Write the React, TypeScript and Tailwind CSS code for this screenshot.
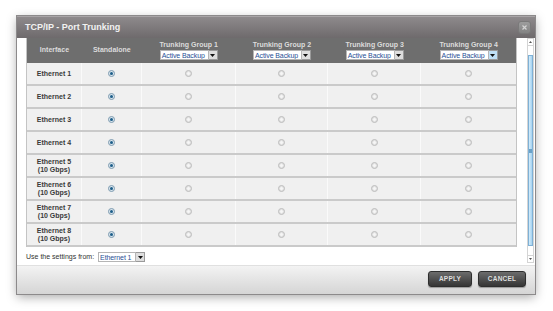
import React from "react";

const groups = [1, 2, 3, 4];
const rows = [
  { name: "Ethernet 1" },
  { name: "Ethernet 2" },
  { name: "Ethernet 3" },
  { name: "Ethernet 4" },
  { name: "Ethernet 5", sub: "(10 Gbps)" },
  { name: "Ethernet 6", sub: "(10 Gbps)" },
  { name: "Ethernet 7", sub: "(10 Gbps)" },
  { name: "Ethernet 8", sub: "(10 Gbps)" },
];
const colWidths = ["w-[94px]", "w-[93px]", "w-[93px]", "w-[95px]"];

export default function App() {
  return (
    <div className="h-[311px] w-[553px] bg-white pl-[17px] pt-[16px] font-['Liberation_Sans',Arial,sans-serif]">
      <div className="flex h-[278px] w-[518px] flex-col shadow-[0_0_0_1px_#8c8a8b,0_3px_10px_rgba(0,0,0,0.35)]">
        <div className="flex h-[22px] items-center justify-between border-t border-[#a9a5a7] bg-gradient-to-b from-[#8e8a8c] to-[#6e6a6c] pl-[8px] pr-[4px]">
          <span className="text-[9px] font-bold text-[#f2f2f2]">TCP/IP - Port Trunking</span>
          <CloseButton />
        </div>

        <div className="flex h-[227px] bg-white">
          <div className="flex w-[500px] flex-col pl-[9px]">
            <Table />
            <div className="flex flex-1 items-center gap-[4px] pt-[2px] text-[7px] text-[#333]">
              <span>Use the settings from:</span>
              <Select label="Ethernet 1" width="w-[38px]" />
            </div>
          </div>
          <Scrollbar />
        </div>

        <div className="flex h-[29px] items-start justify-end gap-[6px] border-t border-[#e0e0e0] bg-gradient-to-b from-[#f3f3f3] to-[#d5d5d5] pr-[9px] pt-[5px]">
          <Button label="APPLY" width="w-[44px]" />
          <Button label="CANCEL" width="w-[48px]" />
        </div>
      </div>
    </div>
  );
}

function Table() {
  return (
    <div className="w-[491px] border-x border-[#c4c4c4]">
      <div className="flex h-[25px] bg-[#6e6e6e] text-[7px] font-bold text-[#dcdcdc]">
        <div className="flex w-[55px] items-center justify-center">Interface</div>
        <div className="flex w-[60px] items-center justify-center">Standalone</div>
        {groups.map((g, i) => (
          <div className={`${colWidths[i]} flex flex-col items-center pt-[2px]`} key={g}>
            <span className="whitespace-nowrap leading-[9px]">Trunking Group {g}</span>
            <div className="mt-[1px]">
              <Select label="Active Backup" width="w-[49px]" focused={g === 4} />
            </div>
          </div>
        ))}
      </div>
      {rows.map((row) => (
        <div className="flex h-[23px] border-b-2 border-[#cacaca] bg-[#f0f0f0]" key={row.name}>
          <div className="flex w-[55px] flex-col items-center justify-center border-r border-[#fafafa] text-[7px] font-bold leading-[8px] text-[#3a3a3a]">
            <span>{row.name}</span>
            {row.sub ? <span>{row.sub}</span> : null}
          </div>
          <div className="flex w-[60px] items-center justify-center border-r border-[#fafafa]">
            <Radio checked />
          </div>
          {groups.map((g, i) => (
            <div className={`${colWidths[i]} flex items-center justify-center ${i < 3 ? "border-r border-[#fafafa]" : ""}`} key={g}>
              <Radio />
            </div>
          ))}
        </div>
      ))}
    </div>
  );
}

function Radio({ checked = false }: { checked?: boolean }) {
  return checked ? (
    <div className="flex h-[7px] w-[7px] items-center justify-center rounded-full border border-[#7e9bb0] bg-[#d7e4ec]">
      <div className="h-[3px] w-[3px] rounded-full bg-[#1d5e89]" />
    </div>
  ) : (
    <div className="flex h-[7px] w-[7px] items-center justify-center rounded-full border border-[#bdbdbd] bg-[#e2e2e2]">
      <div className="h-[3px] w-[3px] rounded-full bg-[#f6f6f6]" />
    </div>
  );
}

function Select({ label, width, focused = false }: { label: string; width: string; focused?: boolean }) {
  return (
    <div className="flex h-[10px] items-stretch">
      <div className={`${width} flex items-center overflow-hidden whitespace-nowrap border border-[#b5b5b5] bg-white pl-[1px] text-[7px] font-normal leading-none tracking-[-0.1px] text-[#1f4f95]`}>{label}</div>
      <div className={`flex w-[9px] items-center justify-center border border-l-0 border-[#9a9a9a] ${focused ? "bg-[#bfe0f6]" : "bg-[#dedede]"}`}>
        <svg width="5" height="3" viewBox="0 0 5 3">
          <path d="M0 0h5L2.5 3z" fill="#111" />
        </svg>
      </div>
    </div>
  );
}

function Scrollbar() {
  return (
    <div className="ml-[10px] flex h-[225px] w-[7px] flex-col border border-[#d4d4d4] bg-white">
      <div className="flex h-[7px] items-center justify-center border-b border-[#d4d4d4]">
        <svg width="3" height="2" viewBox="0 0 3 2">
          <path d="M0 2h3L1.5 0z" fill="#555" />
        </svg>
      </div>
      <div className="flex flex-1 flex-col px-0 py-[9px]">
        <div className="flex flex-1 items-center justify-center border border-[#7fb1d6] bg-gradient-to-r from-[#d2ecfb] to-[#a7d3f0]">
          <div className="h-[4px] w-[3px] bg-[#6ba2c8]" />
        </div>
      </div>
      <div className="flex h-[7px] items-center justify-center border-t border-[#d4d4d4]">
        <svg width="3" height="2" viewBox="0 0 3 2">
          <path d="M0 0h3L1.5 2z" fill="#555" />
        </svg>
      </div>
    </div>
  );
}

function CloseButton() {
  return (
    <div className="flex h-[13px] w-[13px] items-center justify-center rounded-[3px] border border-[#7a7a7a] bg-gradient-to-b from-[#9d9d9d] to-[#838383]">
      <svg width="7" height="7" viewBox="0 0 7 7">
        <path d="M1.5 1.5l4 4M5.5 1.5l-4 4" stroke="#d4d4d4" strokeWidth="1.2" />
      </svg>
    </div>
  );
}

function Button({ label, width }: { label: string; width: string }) {
  return (
    <div className={`${width} flex h-[16px] items-center justify-center rounded-[3px] border border-[#2e2e2e] bg-gradient-to-b from-[#6c6c6c] to-[#363636] text-[6.5px] font-bold tracking-[0.2px] text-[#dedede] shadow-[0_1px_1px_rgba(0,0,0,0.3)]`}>
      {label}
    </div>
  );
}
